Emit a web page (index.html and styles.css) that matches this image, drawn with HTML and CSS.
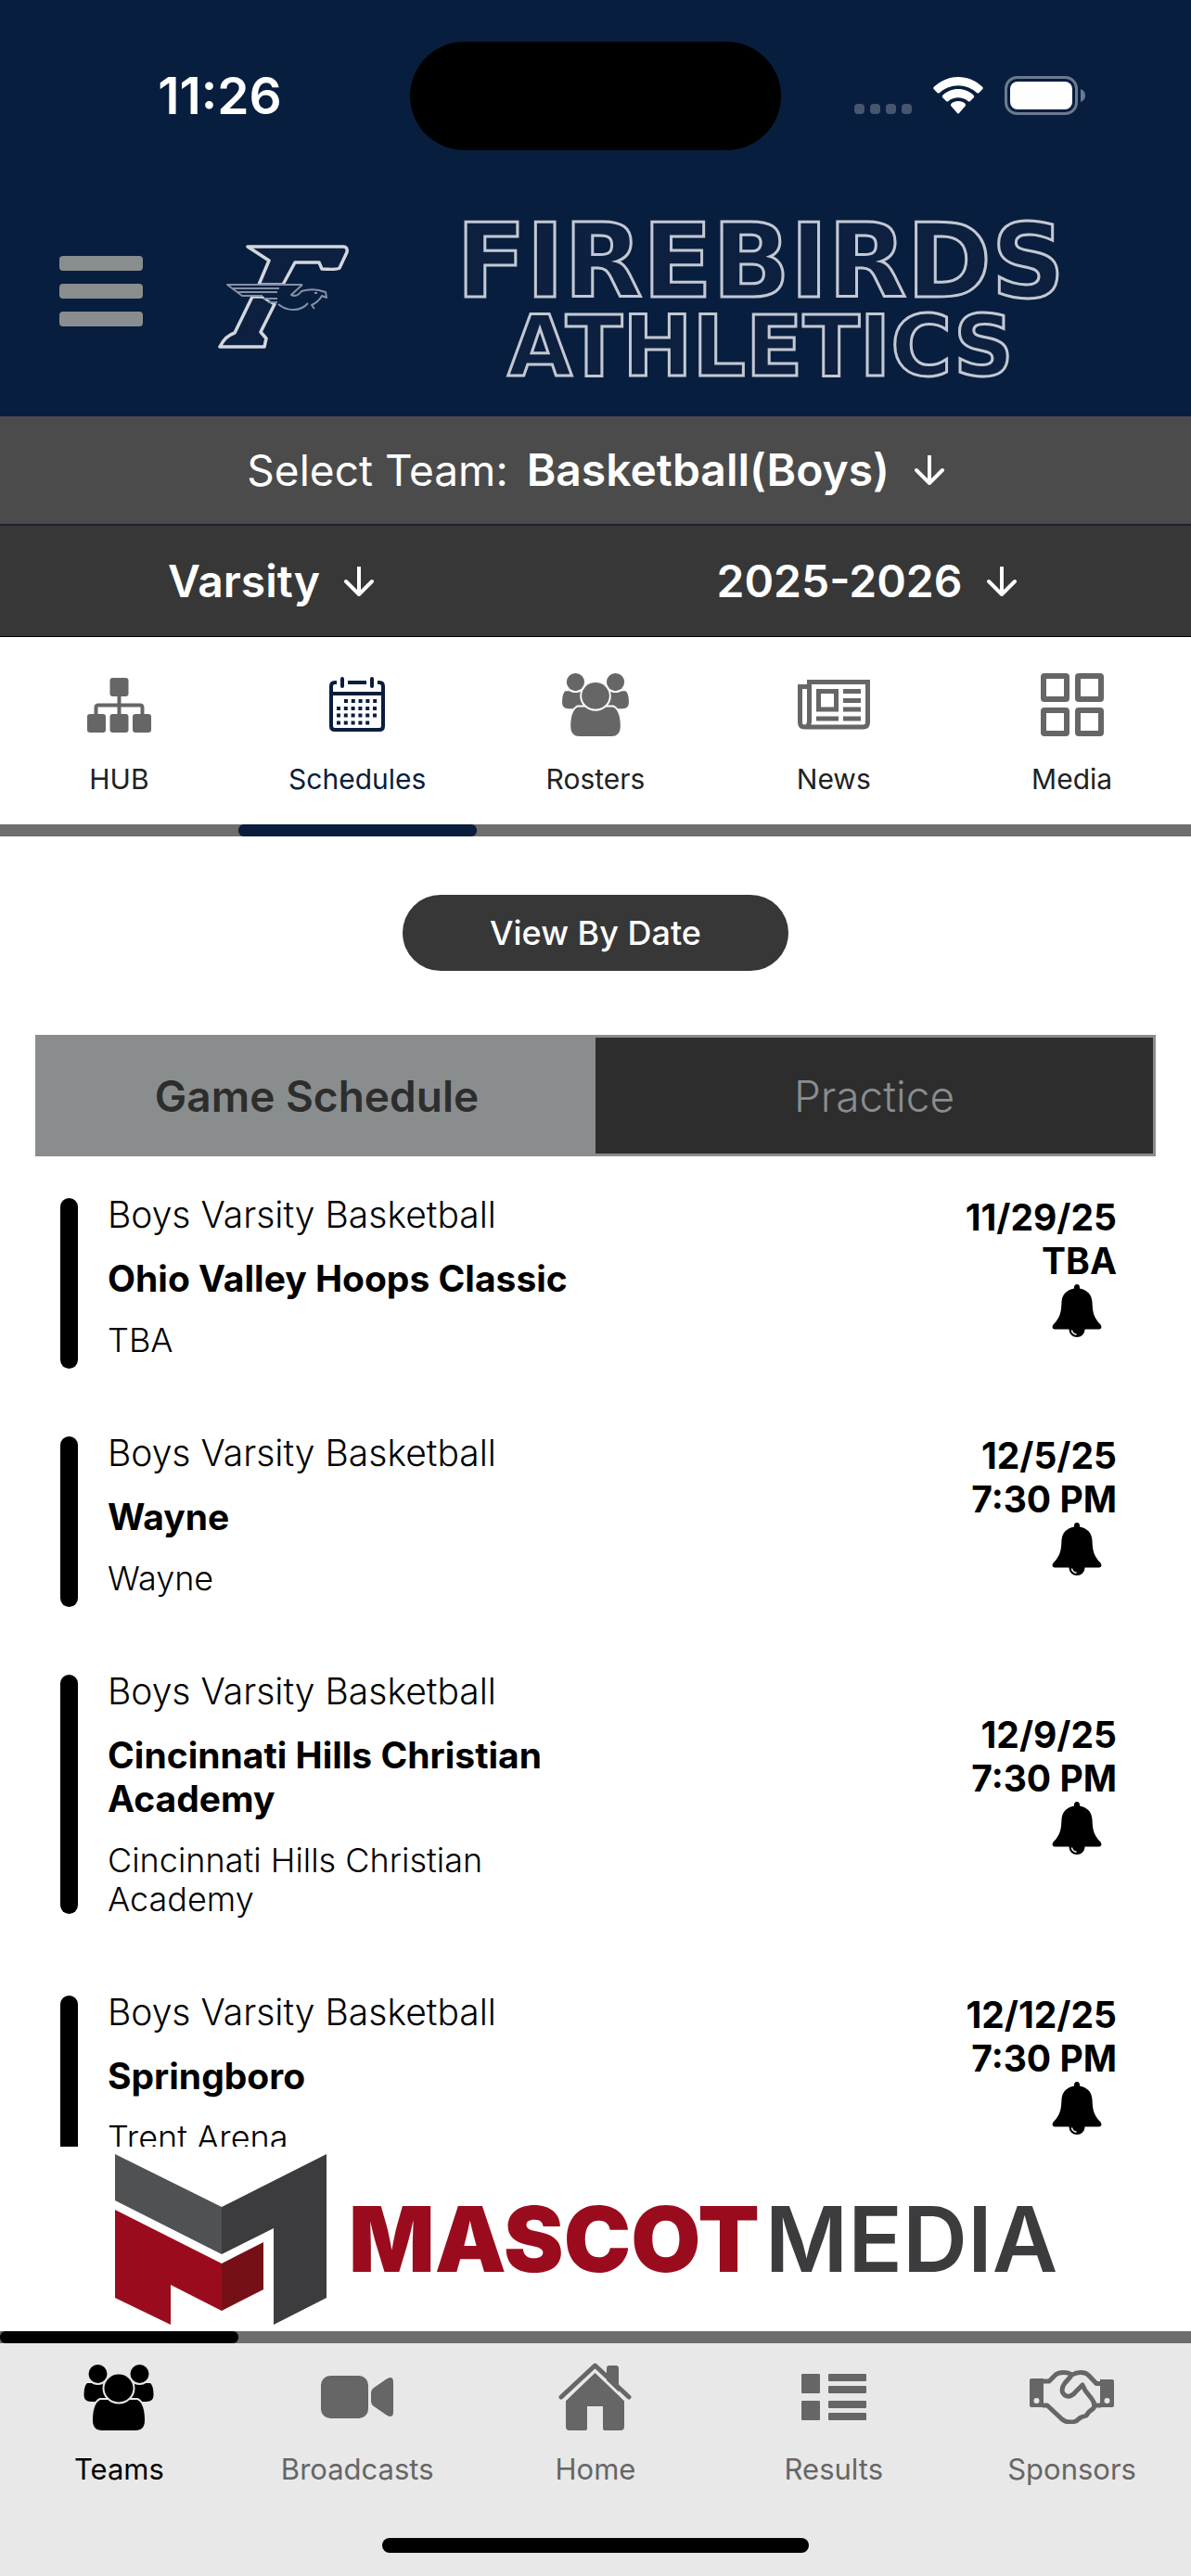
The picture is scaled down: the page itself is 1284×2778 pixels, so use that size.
FILE: index.html
```html
<!DOCTYPE html>
<html lang="en">
<head>
  <meta charset="UTF-8" />
  <meta name="viewport" content="width=device-width, initial-scale=1" />
  <title>Firebirds Athletics | Schedules</title>
  <link rel="stylesheet" href="styles.css">
</head>
<body>
  <!-- shared icons -->
  <svg class="sprite" aria-hidden="true">
    <symbol id="people" viewBox="0 0 76 71">
      <path d="M.5 33C.5 27 1.500 22 4 20H26V40H8Q.5 40 .5 33Z" />
      <path d="M75.500 33C75.500 27 74.500 22 72 20H50V40H68Q75.500 40 75.500 33Z" />
      <g class="halo">
        <circle cx="15.500" cy="10" r="10" />
        <circle cx="60.500" cy="10" r="10" />
        <path d="M10 60C10 50 12 41 18 38H58C64 41 66 50 66 60Q66 71 56 71H20Q10 71 10 60Z" />
        <ellipse cx="38" cy="25.500" rx="15.500" ry="15" />
      </g>
    </symbol>
    <symbol id="bell" viewBox="0 0 54 57">
      <path d="M27 0C29 0 30 1.500 30 3.500V4.500C38 6 43 11 43.500 19C44 28 44 35 52.500 43.500Q55 48 51 48.500H3Q-1 48 1.500 43.500C10 35 10 28 10.500 19C11 11 16 6 24 4.500V3.500C24 1.500 25 0 27 0Z" />
      <path d="M18.500 47H35.500V49A8.500 8 0 0 1 18.500 49Z" />
      <path d="M21.500 49.500Q22 53.500 26.500 54.200" fill="none" stroke="#fff" stroke-width="1.500" />
    </symbol>
    <symbol id="arrow" viewBox="0 0 32 32">
      <path d="M16 1V29M2 16L16 30L30 16" fill="none" stroke="currentColor" stroke-width="4" stroke-linecap="round" stroke-linejoin="round" />
    </symbol>
  </svg>

  <header>
    <div class="status">
      <div class="time">11:26</div>
      <div class="island"></div>
      <div class="signals">
        <svg width="62" height="42" viewBox="0 0 62 42" fill="#46566f">
          <rect x="0" y="30" width="11" height="11" rx="4" />
          <rect x="17" y="30" width="11" height="11" rx="4" />
          <rect x="34" y="30" width="11" height="11" rx="4" />
          <rect x="51" y="30" width="11" height="11" rx="4" />
        </svg>
        <svg width="54" height="40" viewBox="0 0 54 40" fill="#fff">
          <path d="M27 0C37 0 46 4 53 10.500Q54.500 12 53 13.500L49.500 17Q48.500 18 47 17A29.500 29.500 0 0 0 7 17Q5.500 18 4.500 17L1 13.500Q-.5 12 1 10.500C8 4 17 0 27 0Z" />
          <path d="M27 13C33.500 13 39 15.500 43.500 19.500Q45 21 43.500 22.500L40 26Q38.700 27 37.500 26A16.500 16.500 0 0 0 16.500 26Q15.300 27 14 26L10.500 22.500Q9 21 10.500 19.500C15 15.500 20.500 13 27 13Z" />
          <path d="M27 26C30 26 32.500 27 34.500 28.700Q35.700 30 34.500 31.500L28 39Q27 40 26 39L19.500 31.500Q18.300 30 19.500 28.700C21.500 27 24 26 27 26Z" />
        </svg>
        <svg width="87" height="42" viewBox="0 0 87 42">
          <rect x="1.500" y="1.500" width="76" height="39" rx="12" fill="none" stroke="#6b7a91" stroke-width="3" />
          <rect x="6" y="6" width="67" height="30" rx="8" fill="#fff" />
          <path d="M82 14Q87 16 87 21T82 28Z" fill="#6b7a91" />
        </svg>
      </div>
    </div>

    <div class="brand">
      <button class="menu-btn" aria-label="Menu"><i></i><i></i><i></i></button>
      <svg class="emblem" width="142" height="112" viewBox="0 0 142 112" fill="#0d2040" stroke="#d3d7de" stroke-width="3.500" stroke-linejoin="round">
        <path d="M33 2H136Q141 2 140 8L132 25Q130 27 113 26L110 19H84L71 43H45L56 17Z" />
        <path d="M38 56L19 95Q9 98 3 110H51L53 101L47 94L62 64L49 56Z" />
        <path d="M11 43H92L80 54L66 64Q54 60 49 55H27Z" fill="#0a1e3e" stroke="none" />
        <g stroke="#8590a5" stroke-width="2" fill="none">
          <path d="M92 43H11L27 55H49" />
          <path d="M92 43L80 54Q86 57 91 50Q104 46 117 51L118 57L113 55Q109 62 102 65L105 69M98 63Q92 70 82 70Q73 70 66 64" />
          <path d="M17 47H67M21 51H65M50 58H65M55 62H65M105 52H108" />
        </g>
      </svg>
      <div class="wordmark">
        <div class="word-lg">FIREBIRDS</div>
        <div class="word-sm">ATHLETICS</div>
      </div>
    </div>
  </header>

  <div class="team-bar">
    <label for="team">Select Team:</label>
    <select id="team"><option>Basketball(Boys)</option></select>
    <svg class="arrow"><use href="#arrow" /></svg>
  </div>
  <div class="level-bar">
    <div class="picker">
      <select aria-label="Level"><option>Varsity</option></select>
      <svg class="arrow"><use href="#arrow" /></svg>
    </div>
    <div class="picker">
      <select aria-label="Season"><option>2025-2026</option></select>
      <svg class="arrow"><use href="#arrow" /></svg>
    </div>
  </div>

  <nav class="tabs">
    <a href="#">
      <span class="icon">
        <svg width="69" height="59" viewBox="0 0 69 59">
          <rect x="24.500" width="20" height="20" rx="3" />
          <rect y="39" width="20" height="20" rx="3" />
          <rect x="24.500" y="39" width="20" height="20" rx="3" />
          <rect x="49" y="39" width="20" height="20" rx="3" />
          <path d="M34.500 18V41M9.500 41V32Q9.500 29.500 12 29.500H57Q59.500 29.500 59.500 32V41" fill="none" stroke="currentColor" stroke-width="4" />
        </svg>
      </span>
      HUB
    </a>
    <a href="#" class="active">
      <span class="icon">
        <svg width="60" height="60" viewBox="0 0 60 60" fill="none" stroke="currentColor" stroke-width="4">
          <path d="M8 6H6Q2 6 2 10V53Q2 57 6 57H54Q58 57 58 53V10Q58 6 54 6H52M20 6H40M2 18H58" />
          <path d="M14 2V10M46 2V10" stroke-linecap="round" />
          <path d="M16 26H54M8 34H54M8 41.500H54M8 49.500H46" stroke-dasharray="4 3.800" />
        </svg>
      </span>
      Schedules
    </a>
    <a href="#">
      <span class="icon"><svg width="74" height="68"><use href="#people" /></svg></span>
      Rosters
    </a>
    <a href="#">
      <span class="icon">
        <svg width="78" height="54" viewBox="0 0 78 54" fill="none" stroke="currentColor" stroke-width="5">
          <path d="M12.500 46V2.500H75.500V46Q75.500 51 70.500 51H7.500Q2.500 51 2.500 46V7.500H12.500M12.500 44Q12.500 51 7.500 51" />
          <path d="M22.500 12.500H41.500V32H22.500ZM49 12.500H68M49 22.500H68M49 32H68M49 42H68M20 42H44" />
        </svg>
      </span>
      News
    </a>
    <a href="#">
      <span class="icon">
        <svg width="68" height="68" viewBox="0 0 68 68" fill="none" stroke="currentColor" stroke-width="6">
          <rect x="3" y="3" width="25" height="25" rx="1" />
          <rect x="40" y="3" width="25" height="25" rx="1" />
          <rect x="3" y="40" width="25" height="25" rx="1" />
          <rect x="40" y="40" width="25" height="25" rx="1" />
        </svg>
      </span>
      Media
    </a>
  </nav>
  <div class="track"><div class="thumb second"></div></div>

  <main>
    <button class="view-btn">View By Date</button>

    <div class="segment">
      <button class="selected">Game Schedule</button>
      <button>Practice</button>
    </div>

    <section class="games">
      <article class="game">
        <div class="info">
          <p class="team">Boys Varsity Basketball</p>
          <h2>Ohio Valley Hoops Classic</h2>
          <p class="venue">TBA</p>
        </div>
        <div class="when">
          <span>11/29/25</span>
          <span>TBA</span>
          <button aria-label="Notify me"><svg width="54" height="57"><use href="#bell" /></svg></button>
        </div>
      </article>
      <article class="game">
        <div class="info">
          <p class="team">Boys Varsity Basketball</p>
          <h2>Wayne</h2>
          <p class="venue">Wayne</p>
        </div>
        <div class="when">
          <span>12/5/25</span>
          <span>7:30 PM</span>
          <button aria-label="Notify me"><svg width="54" height="57"><use href="#bell" /></svg></button>
        </div>
      </article>
      <article class="game">
        <div class="info">
          <p class="team">Boys Varsity Basketball</p>
          <h2>Cincinnati Hills Christian Academy</h2>
          <p class="venue">Cincinnati Hills Christian Academy</p>
        </div>
        <div class="when">
          <span>12/9/25</span>
          <span>7:30 PM</span>
          <button aria-label="Notify me"><svg width="54" height="57"><use href="#bell" /></svg></button>
        </div>
      </article>
      <article class="game">
        <div class="info">
          <p class="team">Boys Varsity Basketball</p>
          <h2>Springboro</h2>
          <p class="venue">Trent Arena</p>
        </div>
        <div class="when">
          <span>12/12/25</span>
          <span>7:30 PM</span>
          <button aria-label="Notify me"><svg width="54" height="57"><use href="#bell" /></svg></button>
        </div>
      </article>
    </section>
  </main>

  <div class="sponsor">
    <svg width="228" height="184" viewBox="0 0 228 184">
      <path d="M0 0L115 57V108L0 50Z" fill="#505153" />
      <path d="M115 57L228 0V155L171 184V80L115 108Z" fill="#3c3c3e" />
      <path d="M0 60L115 118V169L60 141V184L0 155Z" fill="#9a0c1d" />
      <path d="M115 118L160 95V146L115 169Z" fill="#761017" />
    </svg>
    <div class="sponsor-name"><b>MASCOT</b><span>MEDIA</span></div>
  </div>

  <div class="track"><div class="thumb"></div></div>
  <footer>
    <nav>
      <a href="#" class="active">
        <span class="icon"><svg width="76" height="71"><use href="#people" /></svg></span>
        Teams
      </a>
      <a href="#">
        <span class="icon">
          <svg width="78" height="46" viewBox="0 0 78 46">
            <rect width="51" height="46" rx="10" />
            <path d="M54 19Q54 15 57 13L70 4Q78 -1 78 7V39Q78 47 70 42L57 33Q54 31 54 27Z" />
          </svg>
        </span>
        Broadcasts
      </a>
      <a href="#">
        <span class="icon">
          <svg width="79" height="74" viewBox="0 0 79 74">
            <path d="M52 20V6Q52 3 55 3H62Q65 3 65 6V32Z" />
            <path d="M8 41L39.500 9L71 41V69Q71 73 67 73H50Q48 73 48 71V47H31V71Q31 73 29 73H12Q8 73 8 69Z" />
            <path class="gap" d="M5 42L39.500 9L74 42" />
            <path d="M3 37L39.500 3L76 37" fill="none" stroke="currentColor" stroke-width="5" stroke-linecap="round" stroke-linejoin="round" />
          </svg>
        </span>
        Home
      </a>
      <a href="#">
        <span class="icon">
          <svg width="70" height="50" viewBox="0 0 70 50">
            <rect width="20" height="21" rx="1" />
            <rect y="29" width="20" height="21" rx="1" />
            <rect x="29" width="41" height="8" rx="1" />
            <rect x="29" y="13" width="41" height="8" rx="1" />
            <rect x="29" y="29" width="41" height="8" rx="1" />
            <rect x="29" y="42" width="41" height="8" rx="1" />
          </svg>
        </span>
        Results
      </a>
      <a href="#">
        <span class="icon">
          <svg width="91" height="58" viewBox="0 0 91 58">
            <path fill-rule="evenodd" d="M2 9H15V40H2Q0 40 0 38V11Q0 9 2 9ZM7.500 30A3 3 0 1 0 7.500 36A3 3 0 1 0 7.500 30Z" />
            <path fill-rule="evenodd" d="M76 10H89Q91 10 91 12V38Q91 40 89 40H76ZM83.500 30A3 3 0 1 0 83.500 36A3 3 0 1 0 83.500 30Z" />
            <path d="M14 12H21L28 5Q31 2.500 37 2.500Q42 2.500 46 5Q50 2.500 55 2.500Q61 2.500 64 6L72 14.500H77M45 6L38 14Q34 19 35.500 24Q38 29 43.500 28Q47 27 50 23L57 16L60 22L67 31Q71 36 69 41L64 45L61 49L55 51L50 55Q41 58 35 53L19 38H14M70 38H77" fill="none" stroke="currentColor" stroke-width="5" stroke-linejoin="round" />
          </svg>
        </span>
        Sponsors
      </a>
    </nav>
    <div class="home-indicator"></div>
  </footer>
</body>
</html>
```

FILE: styles.css
```css
* {
  box-sizing: border-box;
}
body {
  font-family: Inter, "Liberation Sans", sans-serif;
  margin: 0;
  height: 100vh;
  display: flex;
  flex-direction: column;
  background: #fff;
  color: #000;
  overflow: hidden;
}
button, select {
  font: inherit;
  color: inherit;
  border: none;
  background: none;
  padding: 0;
  margin: 0;
  appearance: none;
}
a {
  color: inherit;
  text-decoration: none;
}
svg {
  display: block;
  flex-shrink: 0;
}
svg:not([fill]) {
  fill: currentColor;
}
.sprite {
  position: absolute;
  width: 0;
  height: 0;
}
.halo {
  stroke: var(--halo);
  stroke-width: 4px;
  paint-order: stroke;
}
.gap {
  fill: none;
  stroke: var(--halo);
  stroke-width: 3px;
}

/* header */
header {
  background: #081e3f;
  color: #fff;
}
.status {
  display: grid;
  grid-template-columns: 1fr 400px 1fr;
  align-items: center;
  height: 206px;
}
.time {
  padding-left: 32px;
  text-align: center;
  font-size: 55px;
  font-weight: 600;
}
.island {
  height: 117px;
  border-radius: 59px;
  background: #000;
}
.signals {
  display: flex;
  justify-content: center;
  align-items: center;
  gap: 23px;
  padding-right: 36px;
}
.brand {
  display: flex;
  align-items: center;
  height: 243px;
  padding: 0 20px 4px 64px;
}
.menu-btn {
  display: flex;
  flex-direction: column;
  gap: 14px;
  width: 90px;
  margin-bottom: 24px;
}
.menu-btn i {
  height: 16px;
  border-radius: 4px;
  background: #8a8d8e;
}
.emblem {
  margin: 0 0 12px 80px;
}
.wordmark {
  flex: 1;
  text-align: center;
  font-family: "DejaVu Sans", sans-serif;
  font-weight: bold;
  color: #0d2040;
  -webkit-text-stroke: 3px #c3c8d2;
}
.word-lg {
  font-size: 110px;
  line-height: 96px;
}
.word-sm {
  font-size: 90px;
  line-height: 88px;
}

/* team pickers */
.team-bar, .level-bar {
  display: flex;
  align-items: center;
  color: #fff;
  font-size: 48px;
  line-height: 60px;
}
.team-bar {
  justify-content: center;
  height: 118px;
  background: #4b4b4b;
  border-bottom: 2px solid #1b2236;
}
.team-bar label {
  font-size: 46px;
}
.level-bar {
  height: 120px;
  background: #373737;
  border-bottom: 1px solid #000;
}
.team-bar select {
  margin-left: 20px;
}
.team-bar select, .level-bar select {
  font-weight: 600;
}
.picker {
  flex: 1;
  display: flex;
  justify-content: center;
  align-items: center;
  padding-right: 58px;
}
.arrow {
  width: 32px;
  height: 32px;
  margin-left: 26px;
}

/* tabs */
.tabs, footer nav {
  display: flex;
}
.tabs a, footer a {
  flex: 1 1 0;
  display: flex;
  flex-direction: column;
  align-items: center;
  line-height: 36px;
}
.icon {
  display: flex;
  align-items: center;
  color: #666;
}
.tabs {
  --halo: #fff;
  padding: 39px 0 31px;
  font-size: 30px;
  color: #222;
}
.tabs a {
  gap: 28px;
}
.tabs .icon {
  height: 68px;
}
.tabs .active, .tabs .active .icon {
  color: #0a1d3c;
}
.track {
  height: 13px;
  flex-shrink: 0;
  background: #6e6e6e;
}
.thumb {
  width: 20%;
  height: 100%;
  border-radius: 6px;
  background: #000;
}
.thumb.second {
  margin-left: 20%;
  background: #0a1d3c;
}

/* schedule */
main {
  flex: 1;
  min-height: 0;
  overflow: hidden;
  display: flex;
  flex-direction: column;
  padding: 63px 38px 0;
}
.view-btn {
  align-self: center;
  flex-shrink: 0;
  width: 416px;
  height: 82px;
  border-radius: 41px;
  background: #373737;
  color: #fff;
  font-size: 36px;
  font-weight: 500;
}
.segment {
  display: flex;
  flex-shrink: 0;
  height: 131px;
  margin: 69px 0 39px;
  border: 3px solid #8a8d8e;
}
.segment button {
  flex: 1;
  background: #2d2d2d;
  color: #8a8d8e;
  font-size: 46px;
  font-weight: 300;
}
.segment .selected {
  background: #8a8d8e;
  color: #2d2d2d;
  font-weight: 600;
}
.games {
  display: flex;
  flex-direction: column;
  gap: 35px;
  padding: 0 42px 0 27px;
}
.game {
  display: grid;
  grid-template-columns: 19px 530px 1fr;
  column-gap: 32px;
}
.game::before {
  content: "";
  height: 83%;
  margin-top: 6px;
  border-radius: 10px;
  background: #000;
}
.info {
  display: flex;
  flex-direction: column;
  gap: 22px;
  padding-bottom: 42px;
  font-size: 39px;
  line-height: 47px;
}
.info p, .info h2 {
  margin: 0;
}
.info h2 {
  font-size: inherit;
  font-weight: 700;
}
.team {
  font-weight: 300;
}
.info .venue {
  font-size: 36px;
  line-height: 42px;
  font-weight: 300;
}
.when {
  align-self: center;
  display: flex;
  flex-direction: column;
  align-items: flex-end;
  padding-bottom: 64px;
  font-size: 39px;
  line-height: 47px;
  font-weight: 700;
}
.when button {
  margin: 2px 16px 0 0;
}

/* sponsor banner */
.sponsor {
  display: flex;
  align-items: center;
  gap: 24px;
  height: 199px;
  padding-left: 124px;
  flex-shrink: 0;
}
.sponsor-name {
  display: flex;
  gap: 6px;
  font-size: 97px;
  line-height: 100px;
  color: #3c3c3e;
  font-weight: 600;
}
.sponsor-name b {
  font-weight: 900;
  color: #9a0c1d;
}

/* bottom bar */
footer {
  --halo: #e8e8e8;
  flex-shrink: 0;
  padding: 20px 0 25px;
  background: #e8e8e8;
  color: #666;
  font-size: 31px;
}
footer a {
  gap: 22px;
}
footer .icon {
  height: 76px;
}
footer .active, footer .active .icon {
  color: #000;
}
.home-indicator {
  width: 460px;
  height: 16px;
  margin: 56px auto 0;
  border-radius: 8px;
  background: #000;
}
```
